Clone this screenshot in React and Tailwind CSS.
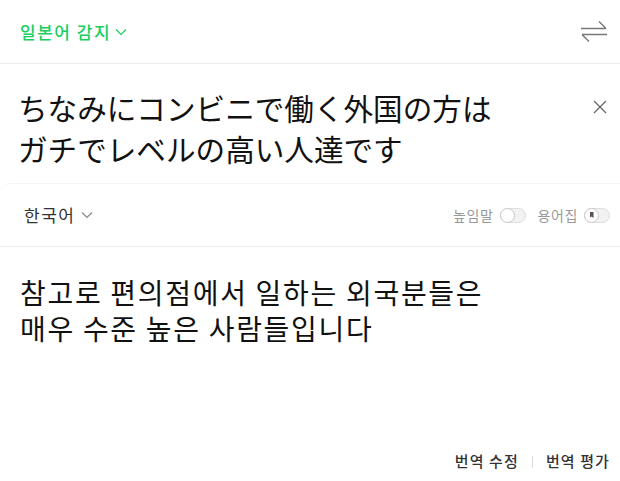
const Chevron = ({ className }) => (
  <svg viewBox="0 0 12 8" className={className} fill="none" stroke="currentColor" strokeWidth="1.2">
    <path d="M1 1.5l5 5 5-5" />
  </svg>
);

const SwapIcon = () => (
  <svg viewBox="0 0 28 24" className="w-[28px] h-[24px]" fill="none" stroke="#777" strokeWidth="1.4">
    <path d="M1 8.5h25M19 1.5l7 7" />
    <path d="M2 14.5h25M2 14.5l7 7" />
  </svg>
);

const CloseIcon = () => (
  <svg viewBox="0 0 14 14" className="w-[14px] h-[14px]" fill="none" stroke="#666" strokeWidth="1.3">
    <path d="M1 1l12 12M13 1L1 13" />
  </svg>
);

const Toggle = ({ mark }) => (
  <div className="relative w-[26px] h-[15px] rounded-full bg-[#f2f2f2] border border-[#ddd]">
    <div className="absolute left-[-1px] top-[-1px] w-[15px] h-[15px] rounded-full bg-white border border-[#c8c8c8] flex items-center justify-center">
      {mark && <div className="w-[4px] h-[6px] bg-[#555] [clip-path:polygon(0_0,100%_0,100%_100%,50%_75%,0_100%)]" />}
    </div>
  </div>
);

export default function App() {
  return (
    <div className="w-[620px] h-[481px] bg-white overflow-hidden flex flex-col" style={{ fontFamily: '"Noto Sans CJK KR", "Noto Sans", sans-serif' }}>
      {/* source header */}
      <div className="h-[64px] flex items-center justify-between pl-[20px] pr-[12px] border-b border-[#ebebeb] shrink-0">
        <div className="flex items-center gap-[4px] text-[17px] tracking-[1.5px] text-[#19ce60] font-medium">
          <span>일본어 감지</span>
          <Chevron className="w-[12px] h-[8px]" />
        </div>
        <SwapIcon />
      </div>

      {/* source text */}
      <div className="h-[119px] flex justify-between pl-[18px] pr-[13px] pt-[23px] shrink-0">
        <p className="text-[29.6px] leading-[41px] text-[#111]" style={{ fontFamily: '"Noto Sans CJK JP", sans-serif' }}>
          ちなみにコンビニで働く外国の方は
          <br />
          ガチでレベルの高い人達です
        </p>
        <div className="mt-[13px]">
          <CloseIcon />
        </div>
      </div>

      {/* target header */}
      <div className="h-[64px] flex items-center justify-between pl-[24px] pr-[10px] border-b border-t border-b-[#ebebeb] border-t-[#f5f5f5] rounded-tl-[12px] shrink-0">
        <div className="flex items-center gap-[6px] text-[17px] tracking-[1.5px] text-[#333]">
          <span>한국어</span>
          <Chevron className="w-[12px] h-[8px] text-[#888]" />
        </div>
        <div className="flex items-center text-[14px] tracking-[0.6px] text-[#999]">
          <span className="mr-[6px]">높임말</span>
          <Toggle />
          <span className="ml-[12px] mr-[6px]">용어집</span>
          <Toggle mark />
        </div>
      </div>

      {/* target text */}
      <div className="flex-1 pl-[20px] pt-[27px]">
        <p className="text-[28px] leading-[36px] tracking-[1.7px] text-[#111]">
          참고로 편의점에서 일하는 외국분들은
          <br />
          매우 수준 높은 사람들입니다
        </p>
      </div>

      {/* footer */}
      <div className="h-[31px] flex items-start justify-end pr-[10px] text-[15px] tracking-[1.1px] font-medium text-[#333] shrink-0">
        <span>번역 수정</span>
        <span className="w-px h-[12px] bg-[#ddd] mx-[13px] mt-[6px]" />
        <span>번역 평가</span>
      </div>
    </div>
  );
}
